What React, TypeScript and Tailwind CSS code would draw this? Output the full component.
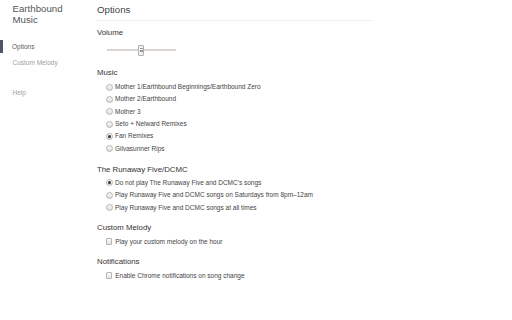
import { useState } from 'react';

const musicOptions = [
  'Mother 1/Earthbound Beginnings/Earthbound Zero',
  'Mother 2/Earthbound',
  'Mother 3',
  'Seto + Nelward Remixes',
  'Fan Remixes',
  'Gilvasunner Rips',
];

const runawayOptions = [
  "Do not play The Runaway Five and DCMC's songs",
  'Play Runaway Five and DCMC songs on Saturdays from 8pm\u201312am',
  'Play Runaway Five and DCMC songs at all times',
];

function Radio({ checked, label, onClick }: { checked: boolean; label: string; onClick: () => void }) {
  return (
    <div onClick={onClick} className="flex h-[12.3px] cursor-pointer items-center pl-[9.5px]">
      <span className="flex h-[7px] w-[7px] items-center justify-center rounded-full border border-[#b4b4b4] bg-gradient-to-b from-[#fafafa] to-[#dedede]">
        {checked && <span className="h-[3px] w-[3px] rounded-full bg-[#333]" />}
      </span>
      <span className="ml-[2.5px] text-[6.5px] leading-[10px] text-[#444]">{label}</span>
    </div>
  );
}

function Checkbox({ label }: { label: string }) {
  const [checked, setChecked] = useState(false);
  return (
    <div
      onClick={() => setChecked((prev) => !prev)}
      className="mt-[3px] flex h-[12px] cursor-pointer items-center pl-[9.7px]"
    >
      <span className="flex h-[6.5px] w-[6.5px] items-center justify-center rounded-[1px] border border-[#b4b4b4] bg-gradient-to-b from-[#fbfbfb] to-[#e4e4e4] text-[5px] leading-none text-[#333]">
        {checked ? '\u2713' : ''}
      </span>
      <span className="ml-[3px] text-[6.5px] leading-[10px] text-[#444]">{label}</span>
    </div>
  );
}

function App() {
  const [music, setMusic] = useState(4);
  const [runaway, setRunaway] = useState(0);

  return (
    <div className="flex h-[320px] w-[512px] bg-white font-['Liberation_Sans',Arial,sans-serif]">
      <div className="w-[96px] shrink-0">
        <div className="pl-[12.5px] pt-[2.5px] text-[9.7px] leading-[11.5px] text-[#555]">
          Earthbound
          <br />
          Music
        </div>
        <div className="mt-[14.5px] flex h-[13px] items-center border-l-[3.5px] border-[#4b5768] pl-[9px] text-[6.5px] text-[#5a5a5a]">
          Options
        </div>
        <div className="mt-[3px] flex h-[13px] items-center pl-[12.5px] text-[6.5px] text-[#a0a0a0]">
          Custom Melody
        </div>
        <div className="mt-[17px] flex h-[13px] items-center pl-[12.5px] text-[6.5px] text-[#a0a0a0]">
          Help
        </div>
      </div>

      <div className="flex-1">
        <div className="w-[277px] border-b border-[#eeeeee] pb-[3px] pl-[1px] pt-[3px] text-[9.7px] leading-[14px] text-[#444]">
          Options
        </div>

        <div className="mt-[7px] pl-[1px] text-[7.8px] leading-[10px] text-[#333]">Volume</div>
        <div className="relative ml-[11px] mt-[6px] flex h-[12px] w-[69px] items-center">
          <div className="h-[1.5px] w-full bg-[#d9d4cf]" />
          <div className="absolute left-[31px] top-[0.5px] flex h-[11px] w-[6px] flex-col items-center justify-center gap-[1px] rounded-[1px] border border-[#b0b0b0] bg-[#f3f3f3]">
            <span className="h-[0.5px] w-[3px] bg-[#999]" />
            <span className="h-[0.5px] w-[3px] bg-[#999]" />
            <span className="h-[0.5px] w-[3px] bg-[#999]" />
          </div>
        </div>

        <div className="mt-[12px] pl-[1px] text-[7.8px] leading-[10px] text-[#333]">Music</div>
        <div className="mt-[3px]">
          {musicOptions.map((option, index) => (
            <Radio key={option} label={option} checked={music === index} onClick={() => setMusic(index)} />
          ))}
        </div>

        <div className="mt-[10px] pl-[1px] text-[7.8px] leading-[10px] text-[#333]">The Runaway Five/DCMC</div>
        <div className="mt-[2px]">
          {runawayOptions.map((option, index) => (
            <Radio key={option} label={option} checked={runaway === index} onClick={() => setRunaway(index)} />
          ))}
        </div>

        <div className="mt-[9px] pl-[1px] text-[7.8px] leading-[10px] text-[#333]">Custom Melody</div>
        <Checkbox label="Play your custom melody on the hour" />

        <div className="mt-[9px] pl-[1px] text-[7.8px] leading-[10px] text-[#333]">Notifications</div>
        <Checkbox label="Enable Chrome notifications on song change" />
      </div>
    </div>
  );
}

export default App;
